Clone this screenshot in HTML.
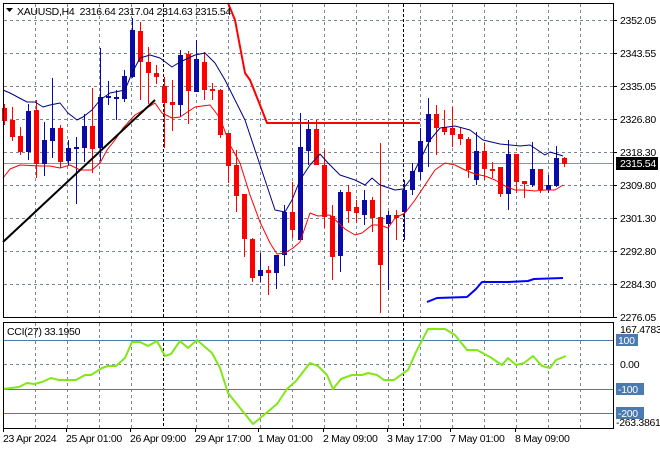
<!DOCTYPE html>
<html><head><meta charset="utf-8"><style>
html,body{margin:0;padding:0;background:#fff;}
svg{display:block;font-family:"Liberation Sans",sans-serif;}
text{letter-spacing:-0.3px;}
</style></head><body>
<svg id="s" width="660" height="450" xmlns="http://www.w3.org/2000/svg"></svg>
<script>
var s=[];
function L(x1,y1,x2,y2,c,w,d){s.push('<line x1="'+x1+'" y1="'+y1+'" x2="'+x2+'" y2="'+y2+'" stroke="'+c+'" stroke-width="'+(w||1)+'"'+(d?' stroke-dasharray="'+d+'"':'')+' shape-rendering="crispEdges"/>');}
function P(pts,c,w){s.push('<polyline fill="none" stroke="'+c+'" stroke-width="'+w+'" stroke-linejoin="round" points="'+pts.map(function(p){return p.join(',')}).join(' ')+'"/>');}
function T(x,y,t,o){s.push('<text x="'+x+'" y="'+y+'" font-size="10.5" '+(o||'')+'>'+t+'</text>');}
var gx=[35,67,99,131,196,228,260,292,324,356,388,420,452,484,516,548,580];
var gy=[20,53,86,119,152,185,218,251,284];
gx.forEach(function(x){L(x+.5,4,x+.5,317,'#7a8694',1,'3,3');L(x+.5,323,x+.5,428,'#7a8694',1,'3,3');});
gy.forEach(function(y){L(4,y+.5,613,y+.5,'#7a8694',1,'3,3');});
L(4,364.5,613,364.5,'#7a8694',1,'3,3');
[163,403].forEach(function(x){L(x+.5,4,x+.5,317,'#000',1,'3,2');L(x+.5,323,x+.5,428,'#000',1,'3,2');});
L(4,163.5,613,163.5,'#8a96a4',1);
var C=[[108,121,104,125],[120,137,107,141],[136,152,127,155],[152,111,104,160],[110,164,100,178],[164,140,122,176],[141,128,78,158],[128,162,125,168],[161,148,140,165],[148,147,137,204],[148,126,114,162],[126,149,88,173],[148,97,48,161],[97,96,81,105],[98,97,90,120],[99,76,70,102],[77,30,18,78],[31,62,22,100],[62,73,47,104],[73,77,65,84],[86,103,77,148],[102,105,80,131],[105,55,50,117],[54,91,51,124],[92,59,40,92],[62,90,52,100],[89,91,83,100],[90,135,89,138],[133,166,133,183],[165,196,150,212],[194,239,194,257],[239,278,238,282],[276,270,253,282],[270,273,266,295],[273,255,255,289],[255,212,205,266],[212,230,182,238],[240,147,113,240],[151,129,120,165],[129,165,120,165],[165,217,150,228],[216,257,205,280],[256,192,190,272],[192,211,185,223],[207,213,200,223],[215,200,190,225],[200,218,197,232],[217,265,143,313],[224,215,211,290],[215,218,210,240],[212,190,180,240],[190,171,163,195],[172,141,128,180],[142,114,98,167],[114,128,105,155],[127,132,110,135],[128,135,107,147],[134,139,127,145],[139,170,137,178],[180,151,132,185],[151,169,143,180],[169,170,162,178],[167,194,167,197],[194,154,140,210],[154,182,154,193],[181,184,181,198],[185,169,142,187],[169,190,169,193],[190,185,175,193],[186,158,146,187],[158,164,157,167]];
C.forEach(function(c,i){var x=4+8*i;var up=c[1]<c[0];var col=up?'#0a0aa8':'#ff0000';
L(x+.5,c[2],x+.5,c[3],col,1);var t=Math.min(c[0],c[1]),h=Math.max(2,Math.abs(c[1]-c[0]));
s.push('<rect x="'+(x-2)+'" y="'+t+'" width="5" height="'+h+'" fill="'+col+'"/>');});
P([[3,90],[10,93],[27,102],[35,102],[43,107],[50,105],[60,103],[68,113],[77,120],[83,117],[92,110],[100,100],[110,93],[125,90],[132,73],[140,58],[150,55],[160,58],[172,67],[180,62],[195,55],[205,53],[215,63],[225,80],[235,100],[245,120],[255,150],[265,180],[275,210],[285,212],[292,200],[300,180],[310,165],[320,154],[328,163],[340,175],[355,180],[365,185],[372,178],[380,185],[395,190],[403,189],[410,180],[420,160],[430,140],[440,128],[455,126],[470,130],[483,140],[500,144],[520,146],[530,145],[545,155],[550,152],[563,156]],'#000080',1);
P([[3,178],[10,169],[20,165],[40,166],[50,166],[60,168],[70,165],[80,170],[92,170],[100,163],[107,150],[115,140],[123,128],[135,115],[147,108],[155,103],[162,113],[172,118],[180,117],[195,107],[210,105],[220,118],[230,145],[240,163],[250,195],[260,222],[270,243],[277,254],[285,253],[293,248],[300,242],[310,213],[318,216],[330,215],[345,229],[355,235],[362,233],[372,225],[380,225],[388,228],[395,218],[405,213],[415,200],[425,185],[435,170],[445,163],[455,165],[465,170],[475,174],[485,176],[495,180],[505,186],[515,190],[525,190],[535,191],[545,190],[555,190],[563,185]],'#ff0000',1);
P([[228,3],[235,20],[245,73],[250,80],[258,100],[267,123],[420,123]],'#ff0000',2);
P([[427,302],[437,298],[467,297],[476,289],[482,282],[508,282],[528,281],[534,279],[563,278]],'#0000ff',2);
P([[3,242],[155,100]],'#000',2);
[340,389,413].forEach(function(y){L(4,y+.5,613,y+.5,'#4a7ab0',1);});
P([[3,389],[19,387],[27,383],[34,384],[42,382],[51,378],[59,380],[76,380],[85,375],[91,375],[102,368],[108,366],[116,366],[125,358],[132,342],[140,342],[148,346],[157,341],[165,356],[171,354],[180,341],[188,348],[197,340],[212,353],[220,368],[228,393],[253,424],[265,414],[277,404],[287,389],[296,381],[310,363],[318,366],[327,375],[333,389],[341,379],[352,375],[362,375],[368,373],[377,375],[384,380],[394,380],[402,374],[408,370],[416,352],[428,329],[445,329],[455,335],[467,350],[477,350],[490,357],[502,365],[508,358],[516,365],[524,363],[533,356],[542,366],[550,368],[556,360],[566,356]],'#80e818',2);
s.push('<rect x="3.5" y="3.5" width="610" height="314" fill="none" stroke="#000"/>');
s.push('<rect x="3.5" y="322.5" width="610" height="106" fill="none" stroke="#000"/>');
var pl=[[20,'2352.05'],[53,'2343.55'],[86,'2335.05'],[119,'2326.80'],[152,'2318.30'],[185,'2309.80'],[218,'2301.30'],[251,'2292.80'],[284,'2284.30'],[317,'2276.05']];
pl.forEach(function(p){L(613,p[0]+.5,617,p[0]+.5,'#000',1);T(620,p[0]+4,p[1]);});
s.push('<rect x="616" y="157" width="42" height="13" fill="#000"/>');
T(620,167,'2315.54','fill="#fff"');
T(620,333,'167.4783');
[[340,'100'],[389,'-100'],[413,'-200']].forEach(function(p){s.push('<rect x="616" y="'+(p[0]-6)+'" width="'+(p[1].length*6+4)+'" height="12" fill="#4a7ab0"/>');T(618,p[0]+4,p[1],'fill="#fff"');});
T(620,368,'0.00');
T(616,426,'-263.3861');
s.push('<path d="M6 8 L13 8 L9.5 12 Z" fill="#000"/>');
T(17,15,'XAUUSD,H4&#160;&#160;2316.64 2317.04 2314.63 2315.54');
T(7,335,'CCI(27) 33.1950');
[[3,'23 Apr 2024'],[66,'25 Apr 01:00'],[130,'26 Apr 09:00'],[195,'29 Apr 17:00'],[258,'1 May 01:00'],[323,'2 May 09:00'],[387,'3 May 17:00'],[450,'7 May 01:00'],[515,'8 May 09:00']].forEach(function(p){L(p[0]+.5,429,p[0]+.5,432,'#000',1);T(p[0],442,p[1]);});
document.getElementById('s').innerHTML=s.join('');
</script>
</body></html>
